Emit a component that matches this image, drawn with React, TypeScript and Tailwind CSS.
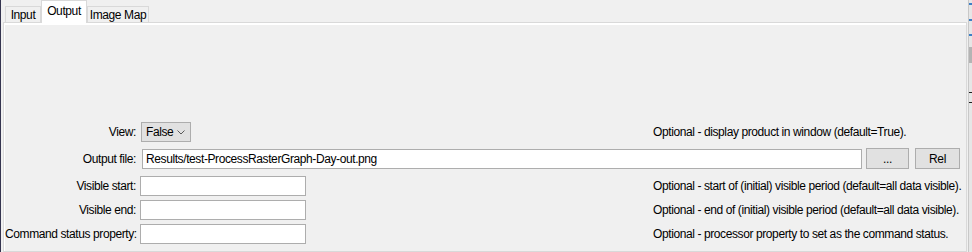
import React from "react";

type Field = {
  label: string;
  help: string;
  mt: string;
};

const fields: Field[] = [
  { label: "Visible start:", help: "Optional - start of (initial) visible period (default=all data visible).", mt: "mt-[8px]" },
  { label: "Visible end:", help: "Optional - end of (initial) visible period (default=all data visible).", mt: "mt-[4px]" },
  { label: "Command status property:", help: "Optional - processor property to set as the command status.", mt: "mt-[4px]" },
];

function Tab({ label, active, width }: { label: string; active?: boolean; width: string }) {
  return (
    <div
      className={`${width} flex items-center justify-center border border-b-0 border-[#d9d9d9] ${
        active ? "h-[23px] bg-white relative z-10 -mb-px pb-[2px]" : "h-[16px] bg-[#f0f0f0]"
      }`}
    >
      {label}
    </div>
  );
}

export default function App() {
  return (
    <div
      className="w-[972px] h-[252px] overflow-hidden flex bg-[#f0f0f0] text-[12px] tracking-[-0.4px] text-black leading-none"
      style={{ fontFamily: '"Liberation Sans", Arial, sans-serif' }}
    >
      {/* window edge */}
      <div className="w-[1px] h-full bg-[#34344f]" />

      <div className="w-[967px] flex flex-col pl-[2px]">
        {/* Tabs */}
        <div className="flex items-end h-[23px] pl-[2px]">
          <Tab label="Input" width="w-[36px]" />
          <Tab label="Output" width="w-[46px]" active />
          <Tab label="Image Map" width="w-[62px]" />
        </div>

        {/* Tab panel */}
        <div className="w-[964px] h-[240px] border border-[#d9d9d9]">
          <div className="h-full border-t-2 border-l border-white pt-[97px]">
            {/* View */}
            <div className="grid grid-cols-[131px_517px_1fr] items-center h-[20px]">
              <div className="text-right">View:</div>
              <div className="pl-[5px]">
                <div className="w-[50px] h-[20px] bg-[#e1e1e1] border border-[#adadad] flex items-center justify-between pl-[4px] pr-[5px]">
                  <span>False</span>
                  <svg width="8" height="5" viewBox="0 0 8 5" fill="none">
                    <path d="M0.5 0.5L4 4L7.5 0.5" stroke="#5a5a5a" strokeWidth="1" />
                  </svg>
                </div>
              </div>
              <div>Optional - display product in window (default=True).</div>
            </div>

            {/* Output file */}
            <div className="grid grid-cols-[131px_1fr] items-center h-[20px] mt-[6px]">
              <div className="text-right">Output file:</div>
              <div className="flex items-center pl-[6px]">
                <div className="w-[720px] h-[20px] bg-white border border-[#adadad] flex items-center pl-[3px]">
                  Results/test-ProcessRasterGraph-Day-out.png
                </div>
                <button className="ml-[4px] w-[43px] h-[21px] bg-[#e1e1e1] border border-[#adadad] flex items-center justify-center">
                  ...
                </button>
                <button className="ml-[6px] w-[45px] h-[21px] bg-[#e1e1e1] border border-[#adadad] flex items-center justify-center">
                  Rel
                </button>
              </div>
            </div>

            {fields.map((f) => (
              <div key={f.label} className={`grid grid-cols-[131px_517px_1fr] items-center h-[20px] ${f.mt}`}>
                <div className="text-right whitespace-nowrap">{f.label}</div>
                <div className="pl-[4px]">
                  <div className="w-[166px] h-[20px] bg-white border border-[#adadad]" />
                </div>
                <div className="whitespace-nowrap">{f.help}</div>
              </div>
            ))}
          </div>
        </div>
      </div>

      {/* neighbouring window edge */}
      <div className="w-[4px] h-full flex">
        <div className="w-[1px] h-full bg-[#c8c8c8]" />
        <div className="flex-1 h-full bg-[#e6e6e6] flex flex-col">
          <div className="mt-[3px] h-[2px] bg-[#3d7fc6]" />
          <div className="mt-[14px] h-[2px] bg-[#3d7fc6]" />
          <div className="mt-[13px] h-[2px] bg-[#3d7fc6]" />
          <div className="mt-[11px] h-[16px] bg-[#b4b4b4]" />
          <div className="mt-[29px] h-[1px] bg-[#202020]" />
          <div className="mt-[9px] h-[1px] bg-[#202020]" />
        </div>
      </div>
    </div>
  );
}
